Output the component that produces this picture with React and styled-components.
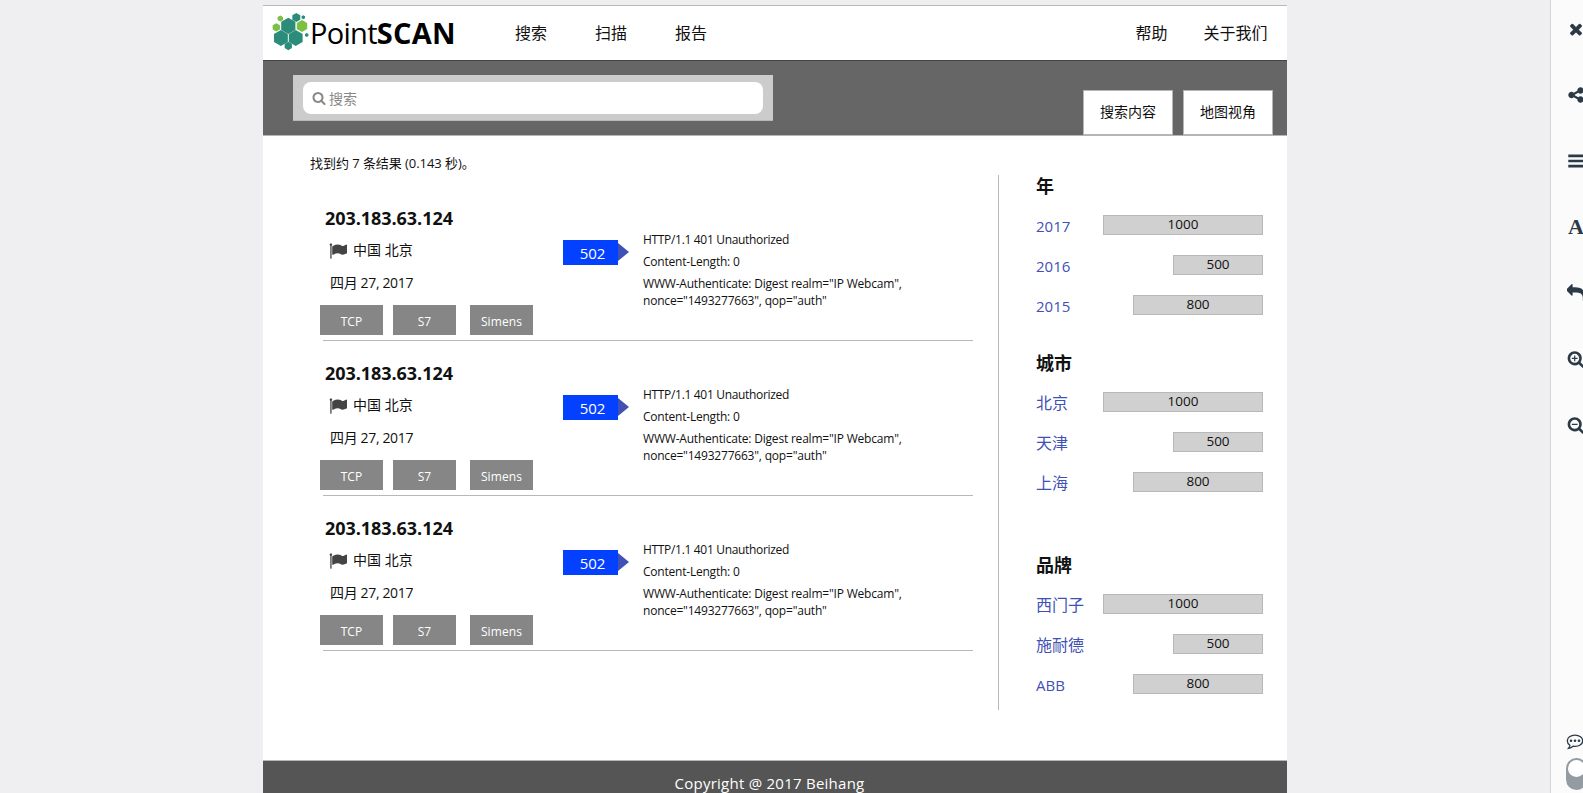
import React from 'react';
import styled, { createGlobalStyle } from 'styled-components';

const GlobalStyle = createGlobalStyle`
  * { box-sizing: border-box; }
  html, body { margin: 0; height: 100%; overflow: hidden; }
  body {
    background: #efeff1;
    color: #111;
    font-family: 'Open Sans', 'Noto Sans CJK SC', sans-serif;
    font-size: 14px;
  }
  a { color: inherit; text-decoration: none; }
  h1, h2, p, ul { margin: 0; padding: 0; }
`;

const Shell = styled.div`
  display: flex;
  justify-content: space-between;
  width: 1583px;
  height: 793px;
  padding-left: 263px;
  overflow: hidden;
`;

const Page = styled.div`
  display: flex;
  flex-direction: column;
  width: 1024px;
  margin-top: 5px;
  border-top: 1px solid #b8b8b8;
  background: #fff;
`;

const Header = styled.header`
  display: flex;
  align-items: center;
  height: 55px;
  padding: 0 19.5px 0 9px;
  border-bottom: 1px solid #444;
`;

const Brand = styled.div`
  display: flex;
  align-items: center;
  width: 243px;
`;

const BrandName = styled.div`
  padding-bottom: 1px;
  font-size: 29px;
  line-height: 40px;
  letter-spacing: -0.7px;
  color: #000;
  white-space: nowrap;
  b { letter-spacing: 0.25px; }
`;

const Nav = styled.nav`
  display: flex;
  gap: ${(p) => p.$gap}px;
  margin-left: ${(p) => (p.$end ? 'auto' : 0)};
  font-size: 16px;
  line-height: 24px;
`;

const SearchBand = styled.div`
  display: flex;
  justify-content: space-between;
  height: 75px;
  padding: 14px 14px 0 30px;
  background: #666;
  border-bottom: 1px solid #b5b5b5;
`;

const SearchFrame = styled.div`
  width: 480px;
  height: 46px;
  padding: 7px 10px;
  background: #ccc;
  border-bottom: 1px solid #b8b8b8;
`;

const SearchField = styled.div`
  display: flex;
  align-items: center;
  gap: 3px;
  height: 32px;
  padding-left: 9px;
  border-radius: 8px;
  background: #fff;
  color: #888;
  font-size: 14px;
`;

const Tabs = styled.div`
  display: flex;
  gap: 10px;
  padding-top: 15px;
`;

const Tab = styled.a`
  width: 90px;
  height: 45px;
  border: 1px solid #b5b5b5;
  background: #fff;
  font-size: 14px;
  line-height: 41px;
  text-align: center;
`;

const Main = styled.main`
  display: flex;
  height: 624px;
`;

const Results = styled.section`
  width: 735px;
  padding: 17px 25px 0 47px;
`;

const Summary = styled.p`
  height: 33px;
  font-size: 13px;
  line-height: 20px;
  letter-spacing: -0.05px;
`;

const Result = styled.article`
  display: flex;
  width: 650px;
  height: 155px;
  margin-left: 13px;
  padding-top: 21px;
  border-bottom: 1px solid #b8b8b8;
`;

const HostInfo = styled.div`
  width: 240px;
`;

const Host = styled.h1`
  margin-left: 2px;
  font-size: 18px;
  line-height: 22px;
  letter-spacing: -0.05px;
`;

const Meta = styled.p`
  display: flex;
  align-items: center;
  gap: 6px;
  height: 20px;
  margin: ${(p) => p.$top}px 0 0 7px;
  line-height: 20px;
  letter-spacing: ${(p) => p.$tracking || 0}px;
`;

const FlagSlot = styled.span`
  display: flex;
  margin-left: -1px;
  padding-top: 2px;
  color: #444;
`;

const Tags = styled.div`
  display: flex;
  margin: 12px 0 0 -3px;
`;

const Tag = styled.span`
  width: 63px;
  height: 30px;
  margin-right: ${(p) => p.$gap}px;
  background: #868686;
  color: #fff;
  font-size: 12px;
  font-weight: 500;
  letter-spacing: 0.1px;
  line-height: 33px;
  text-align: center;
`;

const Port = styled.div`
  display: flex;
  align-items: center;
  width: 80px;
  height: 25px;
  margin-top: 33px;
`;

const PortNumber = styled.span`
  width: 55px;
  height: 25px;
  padding-left: 4px;
  background: #0340ff;
  color: #fff;
  font-size: 15px;
  line-height: 27px;
  text-align: center;
`;

const PortArrow = styled.span`
  margin-top: -2px;
  border: 9px solid transparent;
  border-left: 11px solid #3f51b5;
  border-right: 0;
`;

const Banner = styled.div`
  width: 280px;
  padding-top: 24px;
  font-size: 12px;
  line-height: 17px;
`;

const BannerLine = styled.p`
  margin-bottom: 5px;
  letter-spacing: ${(p) => p.$tracking}px;
`;

const Facets = styled.aside`
  width: 289px;
  height: 535px;
  margin-top: 39px;
  padding-left: 37px;
  border-left: 1px solid #b8b8b8;
`;

const Facet = styled.section`
  height: ${(p) => p.$height}px;
`;

const FacetTitle = styled.h2`
  height: 40px;
  font-size: 18px;
  line-height: 22px;
`;

const FacetRow = styled.div`
  display: flex;
  justify-content: space-between;
  width: 227px;
  height: 40px;
`;

const FacetLabel = styled.a`
  color: #3f51b5;
  font-size: ${(p) => (p.$latin ? 15 : 16)}px;
  line-height: 23px;
`;

const FacetBar = styled.span`
  height: 20px;
  border: 1px solid #b8b8b8;
  background: #d0d0d0;
  font-size: 13.5px;
  line-height: 17px;
  text-align: center;
`;

const Footer = styled.footer`
  height: 33px;
  border-top: 1px solid #b8b8b8;
  background: #555;
  color: #fff;
  font-size: 15px;
  letter-spacing: 0.25px;
  line-height: 45px;
  text-align: center;
  padding-right: 11px;
  overflow: hidden;
`;

const Rail = styled.aside`
  display: flex;
  flex-direction: column;
  width: 33px;
  height: 793px;
  border-left: 1px solid #d5d5d5;
  background: #fbfbfb;
  color: #2c3a47;
  overflow: hidden;
`;

const RailItem = styled.div`
  display: flex;
  flex: none;
  align-items: center;
  height: 66px;
  padding-left: 16px;
  padding-bottom: 1px;
  &:first-child { height: 62px; padding-bottom: 5px; }
`;

const Letter = styled.span`
  margin-left: 1px;
  font: bold 22px/22px 'Liberation Serif', serif;
`;

const RailBottom = styled.div`
  display: flex;
  flex-direction: column;
  gap: 8px;
  margin-top: auto;
  padding: 0 0 3px 15px;
`;

const Toggle = styled.div`
  flex: none;
  width: 21px;
  height: 32px;
  padding: 2px;
  border-radius: 11px;
  background: #959ba3;
  &::before {
    content: '';
    display: block;
    width: 17px;
    height: 17px;
    border-radius: 50%;
    background: #fff;
  }
`;

const Svg = styled.svg`
  flex: none;
  display: block;
  fill: currentColor;
`;

const LENS =
  'M1216 832q0-185-131.5-316.5t-316.5-131.5-316.5 131.5-131.5 316.5 131.5 316.5 316.5 131.5 316.5-131.5 131.5-316.5zm512 832q0 52-38 90t-90 38q-54 0-90-38l-343-342q-179 124-399 124-143 0-273.5-55.5t-225-150-150-225-55.5-273.5 55.5-273.5 150-225 225-150 273.5-55.5 273.5 55.5 225 150 150 225 55.5 273.5q0 220-124 399l343 343q37 37 37 90z';

const ICONS = {
  search: LENS,
  zoomIn: LENS + 'M480 772h228v-228h120v228h228v120h-228v228h-120v-228h-228z',
  zoomOut: LENS + 'M480 772h576v120h-576z',
  close:
    'M1490 1322q0 40-28 68l-136 136q-28 28-68 28t-68-28l-294-294-294 294q-28 28-68 28t-68-28l-136-136q-28-28-28-68t28-68l294-294-294-294q-28-28-28-68t28-68l136-136q28-28 68-28t68 28l294 294 294-294q28-28 68-28t68 28l136 136q28 28 28 68t-28 68l-294 294 294 294q28 28 28 68z',
  share:
    'M1344 1024q133 0 226.5 93.5t93.5 226.5-93.5 226.5-226.5 93.5-226.5-93.5-93.5-226.5q0-12 2-34l-360-180q-92 86-218 86-133 0-226.5-93.5t-93.5-226.5 93.5-226.5 226.5-93.5q126 0 218 86l360-180q-2-22-2-34 0-133 93.5-226.5t226.5-93.5 226.5 93.5 93.5 226.5-93.5 226.5-226.5 93.5q-126 0-218-86l-360 180q2 22 2 34t-2 34l360 180q92-86 218-86z',
  menu: 'M128 256h1600v256h-1600zM128 768h1600v256h-1600zM128 1280h1600v256h-1600z',
  reply:
    'M1792 1120q0 166-127 451-3 7-10.5 24t-13.5 30-13 22q-12 17-28 17-15 0-23.5-10t-8.5-25q0-9 2.5-26.5t2.5-23.5q5-68 5-123 0-112-19.5-200.5t-54-153.5-89-112-117.5-78.5-147.5-43.5-171.5-19.5-196.5-6h-224v256q0 26-19 45t-45 19-45-19l-512-512q-19-19-19-45t19-45l512-512q19-19 45-19t45 19 19 45v256h224q713 0 875 403 53 134 53 333z',
  flag:
    'M320 256q0 72-64 110v1266q0 13-9.5 22.5t-22.5 9.5h-64q-13 0-22.5-9.5t-9.5-22.5v-1266q-64-38-64-110 0-53 37.5-90.5t90.5-37.5 90.5 37.5 37.5 90.5zm1472 64v763q0 25-12.5 38.5t-39.5 27.5q-215 116-369 116-61 0-123.5-22t-108.5-48-115.5-48-142.5-22q-192 0-464 146-17 9-33 9-26 0-45-19t-19-45v-742q0-32 31-55 21-14 79-43 236-120 421-120 107 0 200 29t219 88q38 19 88 19 54 0 117.5-21t110-47 88-47 54.5-21q26 0 45 19t19 45z',
};

const Icon = ({ name, size = 18 }) => (
  <Svg width={size} height={size} viewBox="0 0 1792 1792" aria-hidden="true">
    <path d={ICONS[name]} />
  </Svg>
);

const CommentIcon = () => (
  <Svg width="18" height="16" viewBox="1 0 18 16" aria-hidden="true">
    <path
      d="M10 1.200c4.400 0 7.700 2.500 7.700 5.600s-3.300 5.600-7.700 5.600c-.7 0-1.300 0-1.900-.2-1.300 1.200-2.800 1.900-4.600 2.200.8-.9 1.300-1.800 1.400-3.100C3.300 10.200 2.300 8.600 2.300 6.800 2.300 3.700 5.600 1.200 10 1.200z"
      fill="none"
      stroke="currentColor"
      strokeWidth="1.3"
    />
    <circle cx="6" cy="6.800" r="1.300" />
    <circle cx="10" cy="6.800" r="1.300" />
    <circle cx="14" cy="6.800" r="1.300" />
  </Svg>
);

const TEAL = '#2b8c7a';
const GREEN = '#7ac143';

const HEXAGONS = [
  [16.3, 11.9, 8.2, TEAL],
  [8.9, 23.9, 8, TEAL],
  [23.7, 23.9, 8, TEAL],
  [30, 12, 6, GREEN],
  [4.3, 13.4, 4.2, GREEN],
  [8.3, 4.5, 3.1, GREEN],
  [24.3, 3.5, 4.6, TEAL],
  [31.3, 3.3, 2, TEAL],
  [34.7, 21, 2, TEAL],
  [16.3, 32, 4.2, TEAL],
];

const hexPoints = (x, y, r) =>
  [-90, -30, 30, 90, 150, 210]
    .map((a) => (a * Math.PI) / 180)
    .map((a) => `${(x + r * Math.cos(a)).toFixed(2)},${(y + r * Math.sin(a)).toFixed(2)}`)
    .join(' ');

const LogoSvg = styled(Svg)`
  overflow: visible;
`;

const Logo = () => (
  <LogoSvg width="38" height="38" viewBox="0 0 38 38" aria-hidden="true">
    {HEXAGONS.map(([x, y, r, fill]) => (
      <polygon key={`${x}-${y}`} points={hexPoints(x, y, r)} fill={fill} />
    ))}
  </LogoSvg>
);

const FACETS = [
  { title: '年', height: 177, labels: ['2017', '2016', '2015'] },
  { title: '城市', height: 202, labels: ['北京', '天津', '上海'] },
  { title: '品牌', height: 155, labels: ['西门子', '施耐德', 'ABB'] },
];

const COUNTS = [
  { value: 1000, width: 160 },
  { value: 500, width: 90 },
  { value: 800, width: 130 },
];

const ResultItem = () => (
  <Result>
    <HostInfo>
      <Host>203.183.63.124</Host>
      <Meta $top={11}>
        <FlagSlot>
          <Icon name="flag" size={18} />
        </FlagSlot>
        中国 北京
      </Meta>
      <Meta $top={13} $tracking={-0.35}>四月 27, 2017</Meta>
      <Tags>
        <Tag $gap={10}>TCP</Tag>
        <Tag $gap={14}>S7</Tag>
        <Tag $gap={0}>Simens</Tag>
      </Tags>
    </HostInfo>
    <Port>
      <PortNumber>502</PortNumber>
      <PortArrow />
    </Port>
    <Banner>
      <BannerLine $tracking={-0.32}>HTTP/1.1 401 Unauthorized</BannerLine>
      <BannerLine $tracking={-0.22}>Content-Length: 0</BannerLine>
      <BannerLine $tracking={-0.2}>
        WWW-Authenticate: Digest realm="IP Webcam",
        <br />
        nonce="1493277663", qop="auth"
      </BannerLine>
    </Banner>
  </Result>
);

export default function App() {
  return (
    <>
      <GlobalStyle />
      <Shell>
        <Page>
          <Header>
            <Brand>
              <Logo />
              <BrandName>
                Point<b>SCAN</b>
              </BrandName>
            </Brand>
            <Nav $gap={48}>
              <a href="#search">搜索</a>
              <a href="#scan">扫描</a>
              <a href="#report">报告</a>
            </Nav>
            <Nav $gap={36} $end>
              <a href="#help">帮助</a>
              <a href="#about">关于我们</a>
            </Nav>
          </Header>
          <SearchBand>
            <SearchFrame>
              <SearchField>
                <Icon name="search" size={14} />
                搜索
              </SearchField>
            </SearchFrame>
            <Tabs>
              <Tab href="#content">搜索内容</Tab>
              <Tab href="#map">地图视角</Tab>
            </Tabs>
          </SearchBand>
          <Main>
            <Results>
              <Summary>找到约 7 条结果 (0.143 秒)。</Summary>
              <ResultItem />
              <ResultItem />
              <ResultItem />
            </Results>
            <Facets>
              {FACETS.map((facet) => (
                <Facet key={facet.title} $height={facet.height}>
                  <FacetTitle>{facet.title}</FacetTitle>
                  {facet.labels.map((label, i) => (
                    <FacetRow key={label}>
                      <FacetLabel href="#filter" $latin={/^\w+$/.test(label)}>
                        {label}
                      </FacetLabel>
                      <FacetBar style={{ width: COUNTS[i].width }}>{COUNTS[i].value}</FacetBar>
                    </FacetRow>
                  ))}
                </Facet>
              ))}
            </Facets>
          </Main>
          <Footer>Copyright @ 2017 Beihang</Footer>
        </Page>
        <Rail>
          <RailItem><Icon name="close" /></RailItem>
          <RailItem><Icon name="share" /></RailItem>
          <RailItem><Icon name="menu" /></RailItem>
          <RailItem><Letter>A</Letter></RailItem>
          <RailItem><Icon name="reply" /></RailItem>
          <RailItem><Icon name="zoomIn" /></RailItem>
          <RailItem><Icon name="zoomOut" /></RailItem>
          <RailBottom>
            <CommentIcon />
            <Toggle />
          </RailBottom>
        </Rail>
      </Shell>
    </>
  );
}
